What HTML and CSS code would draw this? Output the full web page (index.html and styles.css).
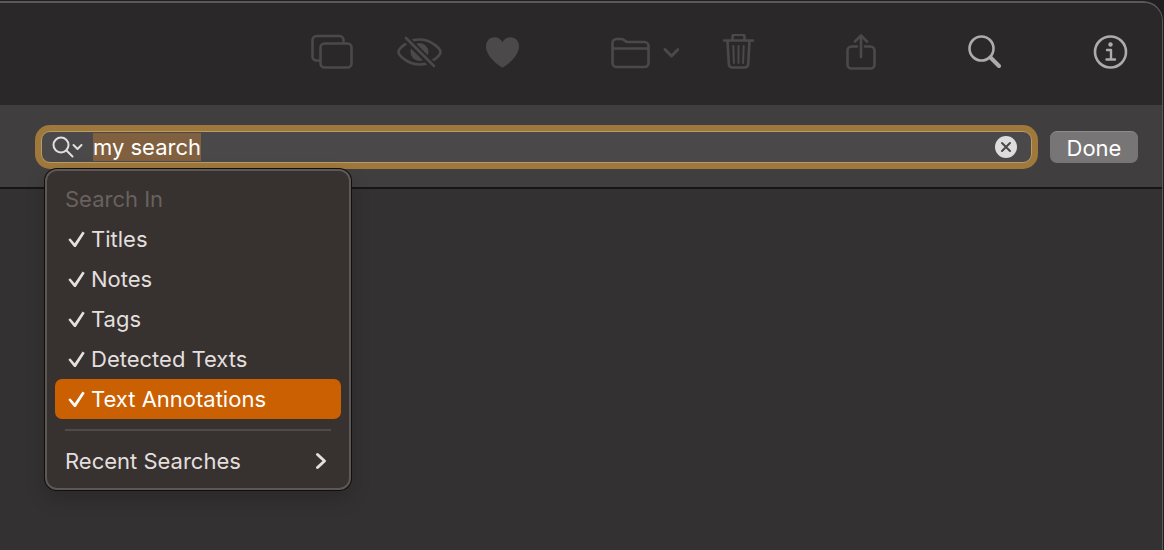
FILE: index.html
```html
<!DOCTYPE html>
<html lang="en">
<head>
<meta charset="utf-8">
<title>Search</title>
<link rel="stylesheet" href="styles.css">
</head>
<body>
<div class="window">
  <header class="toolbar">
    <div class="group">
      <button class="tool" aria-label="Duplicate" disabled><svg width="42" height="36" viewBox="0 0 42 36"><path d="M8 26.500H5.500a4 4 0 0 1-4-4V6a4 4 0 0 1 4-4h23a4 4 0 0 1 4 4v3"/><rect x="9.500" y="9.500" width="31" height="24" rx="4"/></svg></button>
      <button class="tool" aria-label="Hide" disabled><svg width="45" height="36" viewBox="0 0 45 36"><path d="M1.500 18c0-3 9-12.500 21-12.500s21 9.500 21 12.500-9 12.500-21 12.500S1.500 21 1.500 18z"/><circle class="solid" cx="22.500" cy="18" r="9"/><path class="gap" d="M7 2.500l31 31"/><path d="M9 4l28 28"/></svg></button>
      <button class="tool" aria-label="Favorite" disabled><svg width="33" height="36" viewBox="0 0 33 36"><path class="solid" d="M16.500 33.500C14.500 33 0 23 0 12.500 0 7 3.500 3.200 8.500 3.200c3.800 0 6.500 2 8 5 1.500-3 4.200-5 8-5 5 0 8.500 3.800 8.500 9.300 0 10.500-14.500 20.500-16.500 21z"/></svg></button>
    </div>
    <div class="group">
      <button class="tool" aria-label="Move to folder" disabled><svg width="68" height="36" viewBox="0 0 68 36"><path d="M1.500 29V9a4 4 0 0 1 4-4H10q2 0 3.500 1.500T17 8h16.500a4 4 0 0 1 4 4v17a4 4 0 0 1-4 4h-28a4 4 0 0 1-4-4zM2 14.500h35"/><path class="bold" d="M54 15.500l6.500 6.500 6.500-6.500"/></svg></button>
      <button class="tool" aria-label="Delete" disabled><svg width="31" height="36" viewBox="0 0 31 36"><path d="M1 6.500h29M4.500 7l1.300 23q.2 3.500 3.700 3.500h12q3.500 0 3.700-3.500L26.500 7M9.500 6V2.800Q9.500.8 11.500.8h8q2 0 2 2V6"/><path class="thin" d="M10.300 12l.6 17M15.500 12v17M20.700 12l-.6 17"/></svg></button>
    </div>
    <button class="tool" aria-label="Share" disabled><svg width="30" height="36" viewBox="0 0 30 36"><path d="M11 12.500H5.500a4 4 0 0 0-4 4v14a4 4 0 0 0 4 4h19a4 4 0 0 0 4-4v-14a4 4 0 0 0-4-4H19M15 23V2M9 7.500l6-6 6 6"/></svg></button>
    <button class="tool active" aria-label="Search"><svg width="33" height="36" viewBox="0 0 33 36"><circle cx="13.500" cy="14.500" r="12"/><path class="heavy" d="M22.500 23.500l8.500 8.500"/></svg></button>
    <button class="tool active" aria-label="Info"><svg width="35" height="36" viewBox="0 0 35 36"><circle cx="17.500" cy="18" r="15.500"/><circle class="solid" cx="17.500" cy="10.500" r="2.200"/><path class="info" d="M14 16h4v9.500M13.500 25.500h8.500"/></svg></button>
  </header>
  <div class="searchbar">
    <div class="field">
      <button class="scope" aria-label="Search options" aria-expanded="true"><svg width="32" height="24" viewBox="0 0 32 24"><circle cx="9" cy="10" r="7.500"/><path d="M14.500 15.500L20.500 21.500M21.500 10l4 4 4-4"/></svg></button>
      <input class="query" type="text" value="my search" aria-label="Search" spellcheck="false">
      <button class="clear" aria-label="Clear"><svg width="22" height="22" viewBox="0 0 22 22"><circle cx="11" cy="11" r="11"/><path d="M7 7l8 8M15 7l-8 8"/></svg></button>
      <div class="menu">
        <fieldset class="options">
          <legend class="title">Search In</legend>
          <label class="item"><input type="checkbox" class="check" checked>Titles</label>
          <label class="item"><input type="checkbox" class="check" checked>Notes</label>
          <label class="item"><input type="checkbox" class="check" checked>Tags</label>
          <label class="item"><input type="checkbox" class="check" checked>Detected Texts</label>
          <label class="item highlighted"><input type="checkbox" class="check" checked>Text Annotations</label>
        </fieldset>
        <hr class="divider">
        <button class="item recent">Recent Searches<svg width="12" height="18" viewBox="0 0 12 18"><path d="M2.500 2.500L9.500 9l-7 6.500"/></svg></button>
      </div>
    </div>
    <button class="done">Done</button>
  </div>
  <main class="content"></main>
</div>
<script src="script.js"></script>
</body>
</html>
```
FILE: styles.css
```css
* {
  box-sizing: border-box;
}

body {
  margin: 0;
  padding-top: 1px;
  background: #201e20;
  font-family: Inter, "Liberation Sans", sans-serif;
  font-size: 22px;
  color: #e2dfde;
}

button,
input {
  font: inherit;
  color: inherit;
}

button {
  padding: 0;
  border: 0;
  background: none;
}

svg {
  display: block;
  fill: none;
  stroke: currentColor;
  stroke-linecap: round;
  stroke-linejoin: round;
}

.window {
  display: flex;
  flex-direction: column;
  min-height: calc(100vh - 1px);
  margin-right: 1px;
  border: solid #5c595b;
  border-width: 2px 1px 0 0;
  border-top-right-radius: 20px;
  background: #333132;
}

.toolbar {
  display: flex;
  justify-content: flex-end;
  align-items: center;
  gap: 92px;
  height: 102px;
  padding: 0 34px 4px 0;
  border-top-right-radius: 18px;
  background: #2b2829;
}

.group {
  display: flex;
  gap: 44px;
}

.tool {
  color: #4b494a;
}

.tool.active {
  color: #adabac;
}

.tool svg {
  stroke-width: 2.6;
}

.tool .solid {
  fill: currentColor;
  stroke: none;
}

.tool .gap {
  stroke: #2b2829;
  stroke-width: 7;
  stroke-linecap: butt;
}

.tool .bold {
  stroke-width: 3;
}

.tool .thin {
  stroke-width: 2;
}

.tool .heavy {
  stroke-width: 4;
}

.tool .info {
  stroke-width: 2.4;
}

.searchbar {
  display: flex;
  align-items: center;
  gap: 18px;
  height: 84px;
  padding: 2px 24px 0 41px;
  border-bottom: 2px solid #171516;
  background: #403e3f;
}

.field {
  position: relative;
  flex: 1;
  display: flex;
  align-items: center;
  height: 32px;
  padding: 0 14px 0 10px;
  border: 1px solid #b99b68;
  border-radius: 9px;
  background: #4a4849;
  box-shadow: 0 0 0 6px #9f783c;
}

.scope svg {
  stroke-width: 2;
}

.query {
  flex: 1;
  min-width: 0;
  height: 28px;
  margin-left: 9px;
  padding: 0;
  border: 0;
  outline: 0;
  background: none;
  line-height: 28px;
  color: #fff;
  caret-color: transparent;
}

.query::selection {
  background: #80603f;
  color: #fff;
}

.clear circle {
  fill: #dedddd;
  stroke: none;
}

.clear path {
  stroke: #4a4849;
  stroke-width: 2;
}

.done {
  width: 88px;
  height: 32px;
  border-top: 1px solid #8c8a8b;
  border-radius: 7px;
  background: #777576;
  color: #fff;
}

.menu {
  position: absolute;
  top: 37px;
  left: 3px;
  width: 306px;
  padding: 8px 8px 7px;
  border: 2px solid #5d5856;
  border-radius: 12px;
  background: #37312f;
  box-shadow: 0 0 0 1px #100e0e, 0 8px 20px #00000030;
}

.options {
  margin: 0;
  padding: 0;
  border: 0;
}

.title {
  padding: 0 10px;
  line-height: 40px;
  color: #68625f;
}

.item {
  display: flex;
  align-items: center;
  gap: 5px;
  height: 40px;
  padding: 0 13px;
  border-radius: 7px;
}

.highlighted {
  background: #cb6003;
  color: #fff;
}

.check {
  appearance: none;
  width: 18px;
  height: 18px;
  margin: 0;
}

.check:checked {
  background: currentColor;
  clip-path: polygon(2% 54%, 12% 46%, 37% 73%, 81% 8%, 93% 16%, 43% 95%, 34% 95%);
}

.divider {
  height: 2px;
  margin: 10px;
  border: 0;
  background: #504a4b;
}

.recent {
  justify-content: space-between;
  width: 100%;
  padding: 0 14px 0 10px;
}

.recent svg {
  stroke-width: 3;
}

.content {
  flex: 1;
}
```
FILE: script.js
```js
const query = document.querySelector(".query");
query.focus();
query.select();
```
